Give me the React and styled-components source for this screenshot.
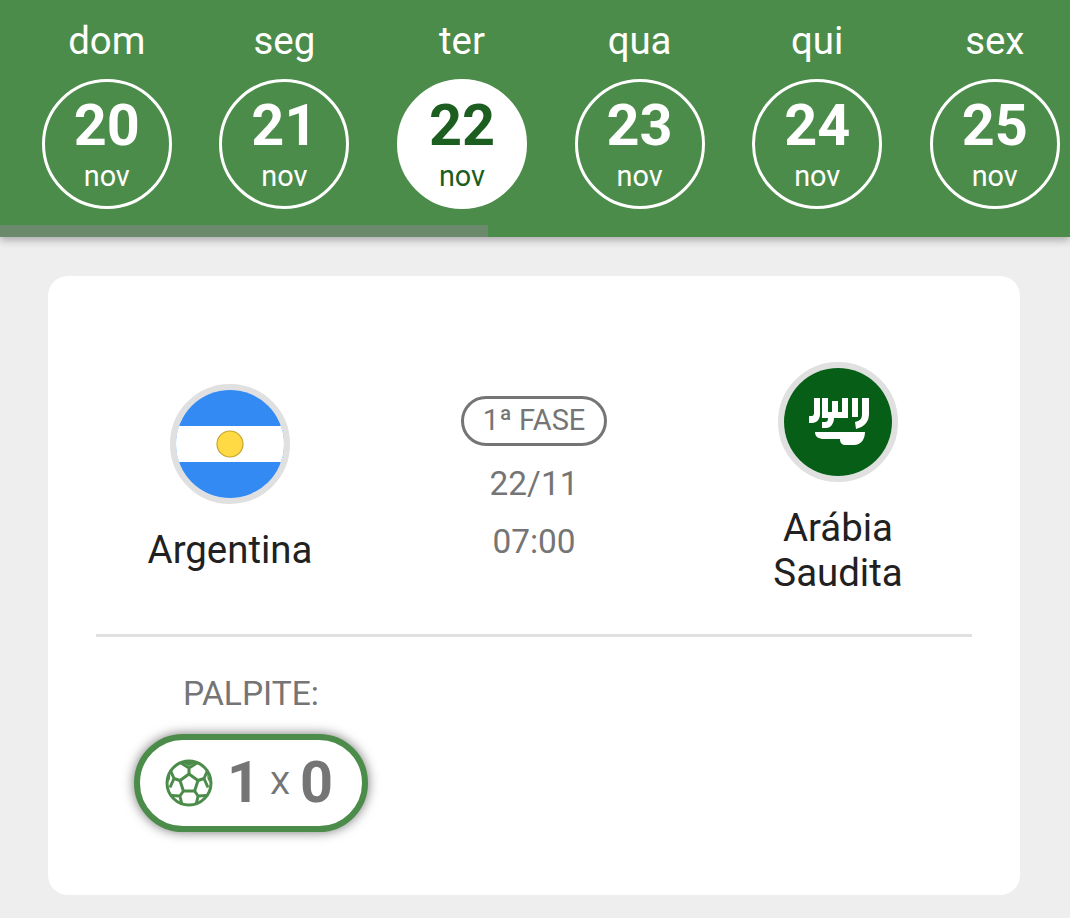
import React from "react";
import styled, { createGlobalStyle } from "styled-components";

const Global = createGlobalStyle`
  html, body { margin: 0; padding: 0; background: #eeeeee; }
  body { font-family: Roboto, "Liberation Sans", sans-serif; }
`;
const Page = styled.div`
  width: 1070px; height: 918px; overflow: hidden; background: #eeeeee;
`;
const Header = styled.header`
  position: relative; height: 237px; background: #4c8c4a;
  box-shadow: 0 3px 8px rgba(0,0,0,.3);
  display: flex; padding-left: 18px; box-sizing: border-box; overflow: hidden;
`;
const ScrollThumb = styled.div`
  position: absolute; left: 0; bottom: 0; width: 488px; height: 12px; background: #6b8a6b;
`;
const Day = styled.div`
  flex: 0 0 177.6px; display: flex; flex-direction: column; align-items: center;
`;
const DayName = styled.div`
  font-size: 38.4px; line-height: 42px; color: #fff; margin-top: 20px; height: 42px;
`;
const Circle = styled.div`
  width: 130px; height: 130px; box-sizing: border-box; margin-top: 17px; border-radius: 50%;
  border: 3px solid #fff; background: ${p => p.$active ? "#fff" : "transparent"};
  color: ${p => p.$active ? "#1b5e20" : "#fff"};
  display: flex; flex-direction: column; align-items: center;
`;
const DayNum = styled.div`
  font-size: 57.6px; font-weight: 700; line-height: 60px; margin-top: 14px;
`;
const Month = styled.div`
  font-size: 28.8px; line-height: 32px; margin-top: 4px;
`;
const Card = styled.section`
  margin: 39px 50px 0 48px; height: 619px; background: #fff; border-radius: 20px;
  padding: 86px 48px 0; box-sizing: border-box;
`;
const Match = styled.div`
  display: grid; grid-template-columns: 268px 1fr 268px; align-items: start;
  height: 233px;
`;
const Team = styled.div`
  display: flex; flex-direction: column; align-items: center; text-align: center;
  padding-top: ${p => p.$top || 0}px;
`;
const FlagRing = styled.div`
  width: 120px; height: 120px; border-radius: 50%; box-sizing: border-box;
  border: 6px solid #e0e0e0; overflow: hidden; background: #fff;
`;
const Flag = styled.svg`display: block; width: 108px; height: 108px;`;
const TeamName = styled.div`
  font-size: 38.4px; line-height: 45px; color: #212121; margin-top: 23px;
`;
const Center = styled.div`
  display: flex; flex-direction: column; align-items: center; color: #757575; padding-top: 34px;
`;
const Phase = styled.div`
  height: 50px; box-sizing: border-box; border: 3px solid #757575; border-radius: 25px;
  padding: 0 19px; font-size: 29px; line-height: 43px;
`;
const MatchInfo = styled.div`
  font-size: 33.4px; line-height: 40px; margin-top: ${p => p.$mt}px;
`;
const Divider = styled.hr`
  margin: 39px 0 0; border: 0; height: 3px; background: #e0e0e0;
`;
const Guess = styled.div`
  width: 234px; margin: 37px 0 0 38px; display: flex; flex-direction: column; align-items: center;
`;
const GuessLabel = styled.div`
  font-size: 33.6px; line-height: 40px; color: #757575;
`;
const GuessPill = styled.div`
  margin-top: 20px; width: 234px; height: 98px; box-sizing: border-box; border-radius: 49px;
  border: 6px solid #4c8c4a; background: #fff; box-shadow: 0 0 12px rgba(0,0,0,.55);
  display: flex; align-items: center; padding-left: 25px; color: #757575;
`;
const Ball = styled.svg`width: 48px; height: 48px; flex: none; margin-right: 14px;`;
const Score = styled.span`
  font-size: 57.6px; font-weight: 700; line-height: 70px;
`;
const X = styled.span`
  font-size: 32px; line-height: 70px; margin: 0 10px;
`;

const days = [
  ["dom", 20], ["seg", 21], ["ter", 22, true], ["qua", 23], ["qui", 24], ["sex", 25],
];

function Argentina() {
  return (
    <Flag viewBox="0 0 108 108">
      <rect width="108" height="108" fill="#338af3" />
      <rect y="36" width="108" height="36" fill="#fff" />
      <circle cx="54" cy="54" r="13" fill="#ffda44" stroke="#c9a52a" strokeWidth="1.2" />
    </Flag>
  );
}

function Saudi() {
  return (
    <Flag viewBox="0 0 108 108">
      <rect width="108" height="108" fill="#075e17" />
      <g fill="#fff">
        <path d="M30 30h6v16c0 5-3 9-8 9h-3v-7h3c1 0 2-1 2-3z" />
        <path d="M38 30h6v14h4V33h6v11h4V30h6v20H50c0 5-3 10-8 10h-4v-6h3c2 0 3-1 3-4h-6z" />
        <path d="M68 30h6v19h-6z" />
        <path d="M78 30h7v16c0 8-5 13-13 15l-1-7c5-1 7-3 7-8z" />
        <path d="M31 64h50c0 7-4 13-11 13h-8c-4 0-6-2-6-6H40c-5 0-9-2-9-7z" />
      </g>
    </Flag>
  );
}

function SoccerBall() {
  return (
    <Ball viewBox="0 0 48 48" fill="none" stroke="#4c8c4a" strokeWidth="3" strokeLinejoin="round">
      <circle cx="24" cy="24" r="22" />
      <path d="M24 15l9 6.500-3.400 10.500H18.400L15 21.500z" />
      <path d="M24 15V9l-8-5M24 9l8-5M33 21.500l6-2 3.500-8M39 19.500l4 9M29.600 32l3.500 5-2 8.500M33.100 37l8.500-.5M18.400 32l-3.500 5 2 8.500M14.900 37l-8.500-.5M15 21.500l-6-2-3.500-8M9 19.500l-4 9" />
      <path d="M17 3.500l7 3.500 7-3.500-7-1.500zM42 11.500l.5 8.500 3 5zM5.500 11.500l-.5 8.500-3 5z" fill="#4c8c4a" stroke="none" />
    </Ball>
  );
}

export default function App() {
  return (
    <Page>
      <Global />
      <Header>
        <ScrollThumb />
        {days.map(([name, num, active]) => (
          <Day key={num}>
            <DayName>{name}</DayName>
            <Circle $active={active}>
              <DayNum>{num}</DayNum>
              <Month>nov</Month>
            </Circle>
          </Day>
        ))}
      </Header>
      <Card>
        <Match>
          <Team $top={22}>
            <FlagRing><Argentina /></FlagRing>
            <TeamName>Argentina</TeamName>
          </Team>
          <Center>
            <Phase>1ª FASE</Phase>
            <MatchInfo $mt={18}>22/11</MatchInfo>
            <MatchInfo $mt={18}>07:00</MatchInfo>
          </Center>
          <Team>
            <FlagRing><Saudi /></FlagRing>
            <TeamName>Arábia<br />Saudita</TeamName>
          </Team>
        </Match>
        <Divider />
        <Guess>
          <GuessLabel>PALPITE:</GuessLabel>
          <GuessPill>
            <SoccerBall />
            <Score>1</Score>
            <X>X</X>
            <Score>0</Score>
          </GuessPill>
        </Guess>
      </Card>
    </Page>
  );
}
